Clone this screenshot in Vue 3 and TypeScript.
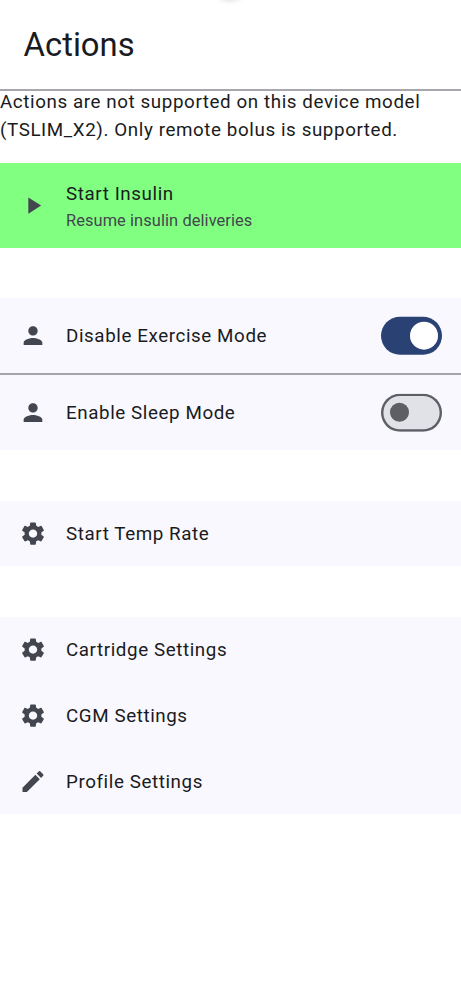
<script setup lang="ts">
interface Row { label: string; icon: 'person' | 'gear' | 'pencil'; toggle?: 'on' | 'off' }
const icons: Record<string, string> = {
  person: 'M12 12c2.21 0 4-1.79 4-4s-1.79-4-4-4-4 1.79-4 4 1.79 4 4 4zm0 2c-2.67 0-8 1.34-8 4v2h16v-2c0-2.66-5.33-4-8-4z',
  gear: 'M19.14 12.94c.04-.3.06-.61.06-.94 0-.32-.02-.64-.07-.94l2.03-1.58c.18-.14.23-.41.12-.61l-1.92-3.32c-.12-.22-.37-.29-.59-.22l-2.39.96c-.5-.38-1.03-.7-1.62-.94l-.36-2.54c-.04-.24-.24-.41-.48-.41h-3.84c-.24 0-.43.17-.47.41l-.36 2.54c-.59.24-1.13.57-1.62.94l-2.39-.96c-.22-.08-.47 0-.59.22L2.74 8.87c-.12.21-.08.47.12.61l2.03 1.58c-.05.3-.09.63-.09.94s.02.64.07.94l-2.03 1.58c-.18.14-.23.41-.12.61l1.92 3.32c.12.22.37.29.59.22l2.39-.96c.5.38 1.03.7 1.62.94l.36 2.54c.05.24.24.41.48.41h3.84c.24 0 .44-.17.47-.41l.36-2.54c.59-.24 1.13-.56 1.62-.94l2.39.96c.22.08.47 0 .59-.22l1.92-3.32c.12-.22.07-.47-.12-.61l-2.01-1.58zM12 15.6c-1.98 0-3.6-1.62-3.6-3.6s1.62-3.6 3.6-3.6 3.6 1.62 3.6 3.6-1.62 3.6-3.6 3.6z',
  pencil: 'M3 17.25V21h3.75L17.81 9.94l-3.75-3.75L3 17.25zM20.71 7.04c.39-.39.39-1.02 0-1.41l-2.34-2.34c-.39-.39-1.02-.39-1.41 0l-1.83 1.83 3.75 3.75 1.83-1.83z',
}
const groups: { name: string; rows: Row[] }[] = [
  { name: 'modes', rows: [
    { label: 'Disable Exercise Mode', icon: 'person', toggle: 'on' },
    { label: 'Enable Sleep Mode', icon: 'person', toggle: 'off' },
  ] },
  { name: 'rate', rows: [{ label: 'Start Temp Rate', icon: 'gear' }] },
  { name: 'settings', rows: [
    { label: 'Cartridge Settings', icon: 'gear' },
    { label: 'CGM Settings', icon: 'gear' },
    { label: 'Profile Settings', icon: 'pencil' },
  ] },
]
</script>

<template>
  <main class="screen">
    <div class="camera"></div>
    <header><h1>Actions</h1></header>
    <p class="notice">Actions are not supported on this device model<br>(TSLIM_X2). Only remote bolus is supported.</p>
    <section class="start">
      <svg class="icon" viewBox="0 0 24 24"><path d="M8 5v14l11-7z" /></svg>
      <div>
        <div class="label">Start Insulin</div>
        <div class="sub">Resume insulin deliveries</div>
      </div>
    </section>
    <section v-for="g in groups" :key="g.name" class="group" :class="g.name">
      <div v-for="r in g.rows" :key="r.label" class="row">
        <svg class="icon" viewBox="0 0 24 24"><path :d="icons[r.icon]" /></svg>
        <span class="label">{{ r.label }}</span>
        <span v-if="r.toggle" class="switch" :class="r.toggle"><i></i></span>
      </div>
    </section>
  </main>
</template>

<style>
body { margin: 0; background: #fff; }
</style>
<style scoped>
.screen { position: relative; height: 1000px; overflow: hidden; box-sizing: border-box; background: #fff; color: #1a1b20; font-family: Roboto, sans-serif; }
.camera { position: absolute; left: 213px; top: -33px; width: 34px; height: 34px; border-radius: 50%; background: #dedede; filter: blur(2.5px); }
header { height: 89px; border-bottom: 2px solid #a8a7ae; padding-left: 23.6px; display: flex; align-items: center; }
h1 { margin: 0; font-size: 32.8px; font-weight: 400; line-height: 42px; }
.notice { margin: -3px 0 0; height: 75px; font-size: 18.8px; line-height: 28px; letter-spacing: .59px; white-space: nowrap; }
.start { height: 85px; background: #80ff80; display: flex; align-items: center; }
.icon { width: 28px; height: 28px; margin: 0 19px; flex: none; fill: #43464f; transform: translateY(-.4px); }
.label { font-size: 18.77px; line-height: 28px; letter-spacing: .59px; }
.sub { font-size: 16.4px; line-height: 24px; letter-spacing: .09px; color: #44464f; position: relative; top: 1px; }
.group { margin-top: 51px; background: #f9f8ff; }
.row { height: 66px; display: flex; align-items: center; }
.modes { margin-top: 50px; }
.modes .row { height: 75px; }
.modes .row + .row { border-top: 2px solid #a5a4aa; }
.rate .row, .settings .row:last-child { height: 65px; }
.switch { margin-left: auto; margin-right: 19px; width: 61px; height: 38px; box-sizing: border-box; border-radius: 19px; display: flex; align-items: center; transform: translateY(-.3px); }
.switch i { display: block; border-radius: 50%; }
.on { background: #2a4174; justify-content: flex-end; padding-right: 4.5px; }
.on i { width: 28px; height: 28px; background: #fff; }
.off { background: #e1e2e8; box-shadow: inset 0 0 0 2.4px #5d5f65; padding-left: 9px; }
.off i { width: 19px; height: 19px; background: #5d5f65; }
</style>
